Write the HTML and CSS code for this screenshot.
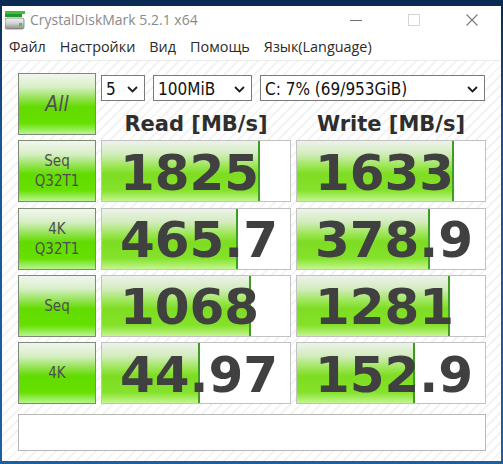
FILE: index.html
```html
<!DOCTYPE html>
<html lang="ru">
<head>
  <meta charset="UTF-8">
  <title>CrystalDiskMark 5.2.1 x64</title>
  <link rel="stylesheet" href="styles.css">
</head>
<body>
<div class="window">

  <div class="titlebar">
    <svg class="app-icon" width="20" height="19" viewBox="0 0 20 19">
      <defs>
        <linearGradient id="drive" x1="0" y1="0" x2="0" y2="1">
          <stop offset="0" stop-color="#f2f2f2"/>
          <stop offset="0.5" stop-color="#d0d0d0"/>
          <stop offset="1" stop-color="#8c8c8c"/>
        </linearGradient>
      </defs>
      <rect x="0" y="0" width="20" height="3" fill="#3fbf3f"/>
      <rect x="0" y="3" width="17" height="3" fill="#23962a"/>
      <rect x="0" y="7" width="19" height="11" rx="2" fill="url(#drive)" stroke="#7a7a7a" stroke-width="0.8"/>
      <rect x="14" y="12" width="3" height="3" fill="#3ccf3c"/>
    </svg>
    <span class="title">CrystalDiskMark 5.2.1 x64</span>
    <div class="controls">
      <div class="ctl"><span class="ctl-min"></span></div>
      <div class="ctl"><span class="ctl-max"></span></div>
      <div class="ctl">
        <svg width="12" height="12" viewBox="0 0 12 12"><path d="M0.5 0.5 L11.5 11.5 M11.5 0.5 L0.5 11.5" stroke="#7a7a7a" stroke-width="1.1"/></svg>
      </div>
    </div>
  </div>

  <div class="menubar">
    <span class="menu-item">Файл</span>
    <span class="menu-item">Настройки</span>
    <span class="menu-item">Вид</span>
    <span class="menu-item">Помощь</span>
    <span class="menu-item">Язык(Language)</span>
  </div>

  <div class="client">
    <div class="board">
      <div class="test-btn test-all">All</div>

      <div class="settings">
        <div class="combos">
          <div class="combo combo-count"><span>5</span><svg width="11" height="7" viewBox="0 0 11 7"><path d="M1 1 L5.5 5.5 L10 1" fill="none" stroke="#1e1e1e" stroke-width="1.8"/></svg></div>
          <div class="combo combo-size"><span>100MiB</span><svg width="11" height="7" viewBox="0 0 11 7"><path d="M1 1 L5.5 5.5 L10 1" fill="none" stroke="#1e1e1e" stroke-width="1.8"/></svg></div>
          <div class="combo combo-drive"><span>C: 7% (69/953GiB)</span><svg width="11" height="7" viewBox="0 0 11 7"><path d="M1 1 L5.5 5.5 L10 1" fill="none" stroke="#1e1e1e" stroke-width="1.8"/></svg></div>
        </div>
        <div class="heads">
          <div>Read [MB/s]</div>
          <div>Write [MB/s]</div>
        </div>
      </div>

      <div class="test-btn">Seq<br>Q32T1</div>
      <div class="cell"><div class="bar" style="width:84%"></div><span class="val">1825</span></div>
      <div class="cell"><div class="bar" style="width:83.5%"></div><span class="val">1633</span></div>

      <div class="test-btn">4K<br>Q32T1</div>
      <div class="cell"><div class="bar" style="width:72.5%"></div><span class="val">465.7</span></div>
      <div class="cell"><div class="bar" style="width:71%"></div><span class="val">378.9</span></div>

      <div class="test-btn">Seq</div>
      <div class="cell"><div class="bar" style="width:79%"></div><span class="val">1068</span></div>
      <div class="cell"><div class="bar" style="width:81.5%"></div><span class="val">1281</span></div>

      <div class="test-btn">4K</div>
      <div class="cell"><div class="bar" style="width:52%"></div><span class="val">44.97</span></div>
      <div class="cell"><div class="bar" style="width:63%"></div><span class="val">152.9</span></div>
    </div>

    <div class="comment"></div>
  </div>

</div>
</body>
</html>
```

FILE: styles.css
```css
body {
  margin: 0;
  height: 464px;
  overflow: hidden;
  background: linear-gradient(#0a2a52, #1a5696 30%, #1d5f9f);
  font-family: "DejaVu Sans", sans-serif;
}

.window {
  margin: 6px 2px 0 2px;
  height: 455px;
  background-color: #fff;
  display: flex;
  flex-direction: column;
}

/* title bar */
.titlebar {
  height: 27px;
  display: flex;
  align-items: center;
}

.app-icon {
  margin-left: 3px;
  margin-top: 2px;
}

.title {
  margin-left: 5px;
  font-family: "Open Sans", sans-serif;
  font-size: 14px;
  color: #8a8a8a;
}

.controls {
  margin-left: auto;
  display: flex;
  height: 100%;
}

.ctl {
  width: 58px;
  display: flex;
  align-items: center;
  justify-content: center;
}

.ctl-min {
  width: 12px;
  height: 1px;
  margin-top: 1px;
  background-color: #707070;
}

.ctl-max {
  width: 10px;
  height: 10px;
  border: 1px solid #d4d4d4;
}

/* menu */
.menubar {
  height: 27px;
  display: flex;
  align-items: center;
  border-bottom: 1px solid #ececec;
}

.menu-item {
  padding: 0 7px;
  font-family: "Open Sans", sans-serif;
  font-size: 14.4px;
  color: #2a2a2a;
}

/* main area */
.client {
  flex: 1;
  padding: 12px 0 0 16px;
  background: repeating-linear-gradient(135deg, #fff 0 5px, #f3f3f3 5px 7px);
}

.board {
  display: grid;
  grid-template-columns: 78px 190px 190px;
  grid-template-rows: repeat(5, 62px);
  column-gap: 5px;
  row-gap: 5.25px;
}

.test-btn {
  box-sizing: border-box;
  border: 1px solid #7c8a76;
  background: linear-gradient(#f3f5f1 0%, #d6efc4 22%, #8fe24a 42%, #62dc00 55%, #66e000 82%, #b8f590 100%);
  display: flex;
  align-items: center;
  justify-content: center;
  text-align: center;
  font-family: "DejaVu Sans Condensed", "DejaVu Sans", sans-serif;
  font-size: 15px;
  line-height: 20px;
  color: #4e4e4e;
}

.test-all {
  font-size: 21px;
  font-style: italic;
  color: #505050;
}

.settings {
  grid-column: 2 / 4;
  padding-top: 2px;
}

.combos {
  display: flex;
  gap: 8px;
}

.combo {
  box-sizing: border-box;
  height: 26px;
  border: 1px solid #7a7a7a;
  background-color: #fff;
  display: flex;
  align-items: center;
  justify-content: space-between;
  padding: 1px 6px 0 4px;
  font-family: "DejaVu Sans Condensed", "DejaVu Sans", sans-serif;
  font-size: 17px;
  color: #111;
}

.combo svg {
  margin-top: 1px;
}

.combo-count {
  width: 44px;
}

.combo-size {
  width: 99px;
}

.combo-drive {
  width: 225px;
}

.heads {
  margin-top: 11px;
  display: grid;
  grid-template-columns: 190px 190px;
  column-gap: 5px;
  font-weight: bold;
  font-size: 21px;
  line-height: 25px;
  color: #2e2e2e;
  text-align: center;
}

/* result cells */
.cell {
  box-sizing: border-box;
  border: 1px solid #c2c2c2;
  background-color: #fff;
  display: grid;
}

.bar {
  grid-area: 1 / 1;
  box-sizing: border-box;
  border-right: 2px solid #3f9a26;
  background: linear-gradient(#eef2eb 0%, #d2ecbc 22%, #9be654 42%, #7edc22 55%, #84e22a 82%, #c4f590 100%);
}

.val {
  grid-area: 1 / 1;
  align-self: center;
  padding: 3px 0 0 18px;
  font-weight: bold;
  font-size: 50px;
  color: #404040;
  line-height: 56px;
}

.comment {
  box-sizing: border-box;
  margin-top: 10px;
  width: 468px;
  height: 37px;
  border: 1px solid #b8b8b8;
  background-color: #fff;
}
```
